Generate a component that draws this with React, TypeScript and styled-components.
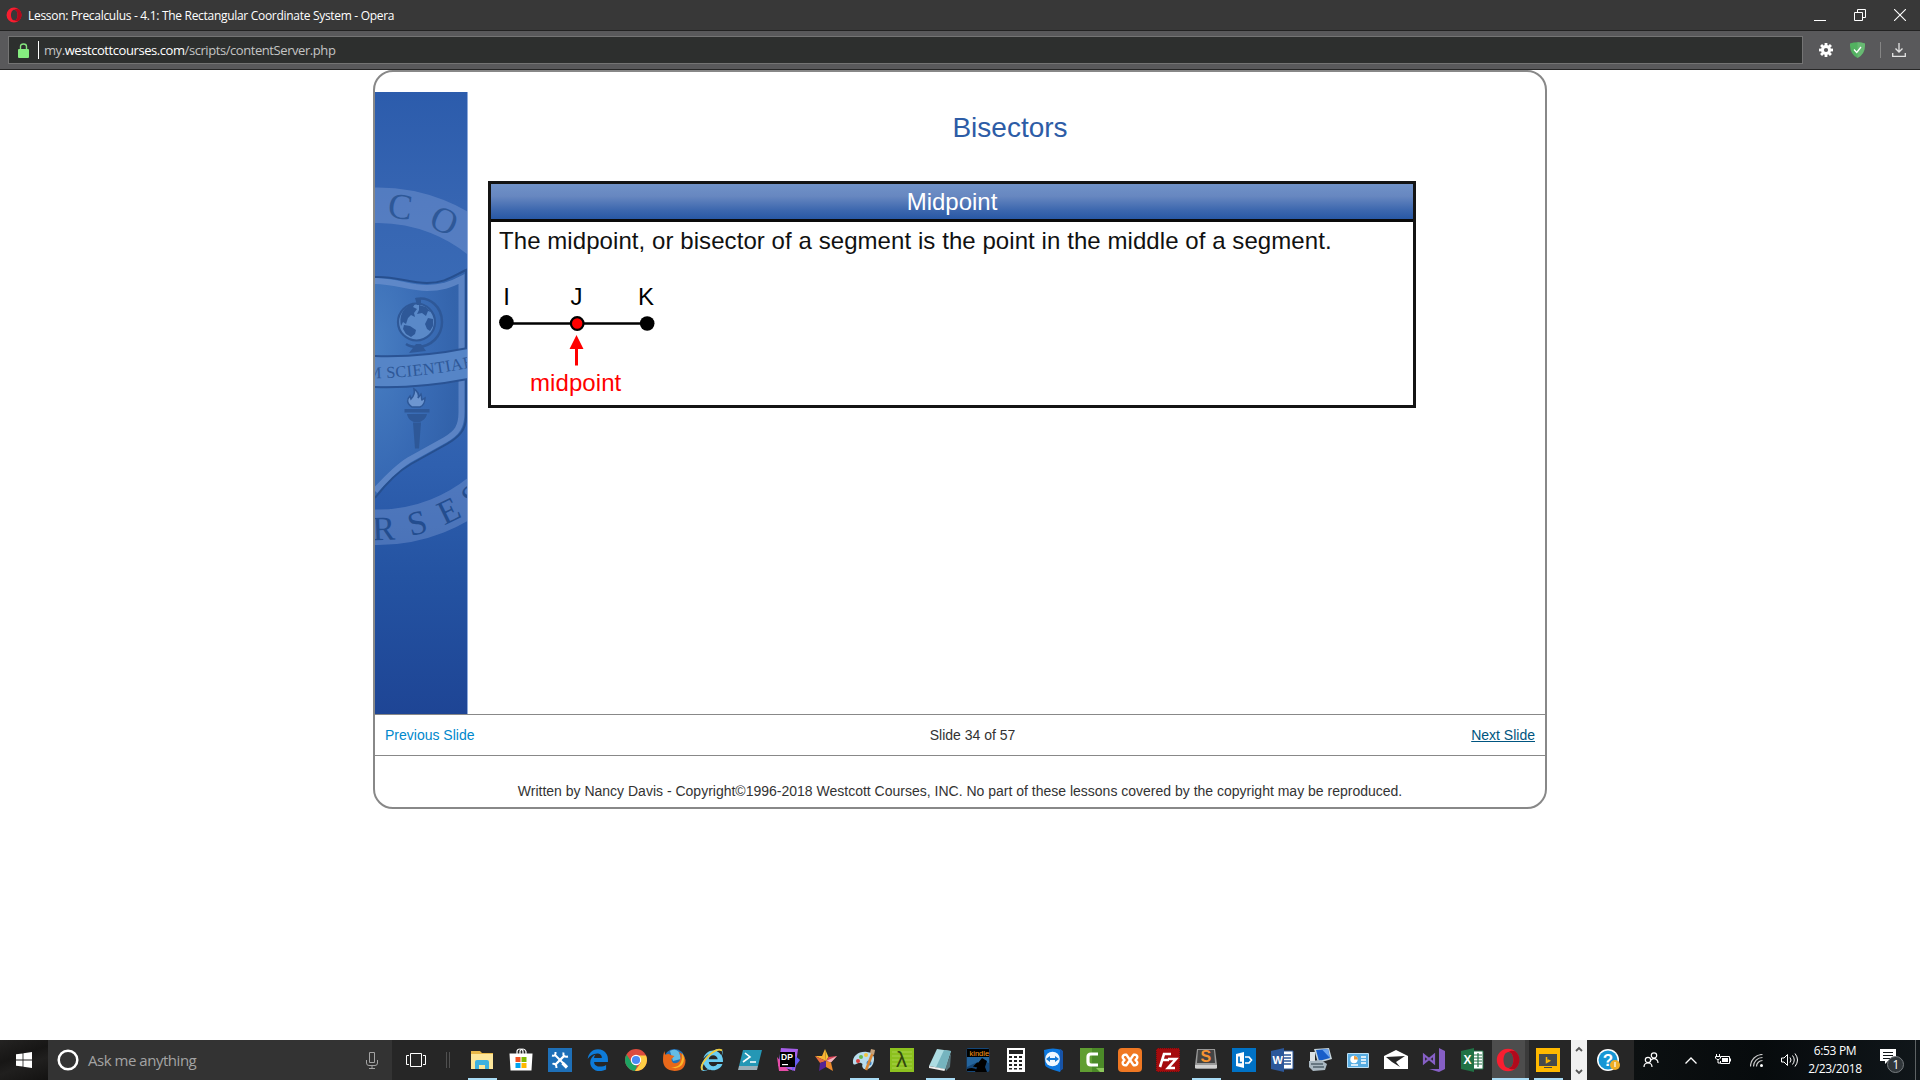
import React from "react";
import styled, { createGlobalStyle } from "styled-components";
import { FaInternetExplorer } from "react-icons/fa";

const GlobalStyle = createGlobalStyle`
  * { box-sizing: border-box; }
  html, body { margin: 0; padding: 0; background: #fff; overflow: hidden; }
  svg { display: block; flex: none; }
`;
const UI = `"Open Sans", "Noto Sans", sans-serif`;
const ARIAL = `"Liberation Sans", Arial, sans-serif`;

const Screen = styled.div`
  width: 1920px;
  height: 1080px;
  display: flex;
  flex-direction: column;
  background: #fff;
  font-family: ${UI};
`;

/* ---------- browser chrome ---------- */
const TitleBar = styled.header`
  height: 31px;
  display: flex;
  align-items: center;
  padding: 0 14px 0 6px;
  background: #383838;
  border-bottom: 1px solid #222;
  color: #fff;
`;
const WindowTitle = styled.span`
  flex: 1;
  margin-left: 6px;
  font-size: 12px;
  letter-spacing: -0.3px;
  white-space: nowrap;
  padding-top: 1px;
`;
const WindowButtons = styled.div`
  display: flex;
  gap: 28px;
`;
const AddressRow = styled.div`
  height: 39px;
  display: flex;
  align-items: center;
  padding: 0 14px 0 8px;
  background: #59595b;
  border-bottom: 1px solid #272727;
`;
const AddressField = styled.div`
  width: 1795px;
  height: 28px;
  display: flex;
  align-items: center;
  padding: 0 9px;
  background: #2d2f2e;
  border: 1px solid #747474;
  color: #c4c4c4;
  font-size: 13px;
  letter-spacing: -0.43px;
  white-space: nowrap;
  b { font-weight: 400; color: #fff; }
`;
const Caret = styled.i`
  width: 1px;
  height: 18px;
  margin: 0 5px 0 9px;
  background: #fff;
`;
const ToolButtons = styled.div`
  flex: 1;
  display: flex;
  align-items: center;
  justify-content: flex-end;
`;
const ToolSeparator = styled.i`
  width: 1px;
  height: 16px;
  margin: 0 11px 0 15px;
  background: #858585;
`;

/* ---------- lesson page ---------- */
const Page = styled.main`
  height: 970px;
  display: flex;
  justify-content: center;
  align-items: flex-start;
`;
const Card = styled.section`
  width: 1174px;
  height: 739px;
  display: flex;
  flex-direction: column;
  border: 2px solid #888;
  border-radius: 20px;
  padding-top: 20px;
  font-family: ${ARIAL};
`;
const SlideBody = styled.div`
  height: 622px;
  display: flex;
`;
const Content = styled.div`
  flex: 1;
  padding-left: 20px;
`;
const SlideTitle = styled.h1`
  width: 1044px;
  margin: 0;
  padding: 20px 0 0;
  height: 89px;
  font-weight: 400;
  font-size: 28px;
  line-height: 32px;
  text-align: center;
  color: #2d5ca6;
`;
const Box = styled.article`
  width: 928px;
  height: 227px;
  border: 3px solid #141414;
`;
const BoxHeader = styled.h2`
  margin: 0;
  height: 38px;
  border-bottom: 3px solid #0a0a0a;
  background: linear-gradient(#7092c8, #6787c0 35%, #3c67ae 75%, #2858a5);
  color: #fff;
  font-weight: 400;
  font-size: 24px;
  line-height: 35px;
  text-align: center;
`;
const Definition = styled.p`
  margin: 0;
  padding: 5px 0 0 8px;
  font-size: 24px;
  letter-spacing: 0.07px;
  line-height: 28px;
  white-space: nowrap;
  color: #111;
`;
const NavRow = styled.nav`
  height: 42px;
  display: grid;
  grid-template-columns: 1fr auto 1fr;
  align-items: center;
  padding: 0 10px;
  border-top: 1px solid #888;
  border-bottom: 1px solid #888;
  font-size: 14px;
  color: #333;
`;
const SlideCount = styled.span`
  padding-left: 25px;
`;
const SlideLink = styled.a<{ $hover?: boolean }>`
  justify-self: ${(p) => (p.$hover ? "end" : "start")};
  color: ${(p) => (p.$hover ? "#005580" : "#0088cc")};
  text-decoration: ${(p) => (p.$hover ? "underline" : "none")};
`;
const Copyright = styled.footer`
  padding-top: 26px;
  font-size: 14px;
  line-height: 18px;
  text-align: center;
  color: #333;
`;

/* ---------- taskbar ---------- */
const Taskbar = styled.footer`
  height: 40px;
  display: flex;
  background: #262626;
  color: #fff;
  > * { flex: none; }
`;
const StartButton = styled.div`
  width: 48px;
  display: flex;
  align-items: center;
  justify-content: center;
  background: linear-gradient(160deg, #242322, #171615 40%, #201f1e 60%, #131211);
`;
const SearchBox = styled.div`
  width: 344px;
  display: flex;
  align-items: center;
  padding: 0 14px 0 9px;
  background: #333;
  color: #a3a3a3;
  font-size: 15px;
  letter-spacing: -0.47px;
  span { flex: 1; padding-left: 9px; }
`;
const TaskTools = styled.div`
  width: 71px;
  display: flex;
  align-items: center;
  padding-left: 14px;
  gap: 20px;
`;
const AppStrip = styled.div`
  width: 1108px;
  display: flex;
`;
const AppCell = styled.div<{ $active?: boolean }>`
  width: 38px;
  flex: none;
  height: 40px;
  display: flex;
  flex-direction: column;
  align-items: center;
  justify-content: space-between;
  padding: ${(p) => (p.$active ? "8px 4px 0 0" : "8px 0 0")};
  background: ${(p) => (p.$active ? "linear-gradient(90deg, #262626 1px, #4d4d4d 1px, #4d4d4d 34px, #3b3b3b 34px)" : "none")};
  &:nth-child(2) { width: 40px; }
`;
const RunBar = styled.i<{ $on?: boolean; $wide?: boolean }>`
  width: ${(p) => (p.$wide ? 37 : 29)}px;
  height: 2px;
  align-self: ${(p) => (p.$wide ? "flex-end" : "center")};
  margin-right: ${(p) => (p.$wide ? -4 : 0)}px;
  background: ${(p) => (p.$on ? "#a9dcf5" : "transparent")};
`;
const Scroller = styled.div`
  width: 16px;
  display: flex;
  flex-direction: column;
  align-items: center;
  justify-content: space-between;
  padding: 6px 0 5px;
  background: #f0f0f0;
`;
const HelpCell = styled.div`
  width: 47px;
  display: flex;
  align-items: center;
  padding-left: 9px;
`;
const Tray = styled.div`
  width: 286px;
  display: flex;
  align-items: center;
  padding-left: 8px;
  background: linear-gradient(90deg, #0c1011, #070b0d 45%, #10161a);
`;
const TrayItem = styled.div<{ $w: number }>`
  width: ${(p) => p.$w}px;
  flex: none;
  display: flex;
  justify-content: center;
`;
const Clock = styled.div`
  width: 64px;
  flex: none;
  display: flex;
  flex-direction: column;
  align-items: center;
  font-size: 12px;
  line-height: 18px;
  letter-spacing: -0.35px;
  white-space: nowrap;
`;
const ActionCenter = styled.div`
  width: 48px;
  flex: none;
  display: flex;
  justify-content: center;
  padding-left: 2px;
`;
const DesktopEdge = styled.i`
  width: 1px;
  height: 40px;
  margin-left: auto;
  margin-right: 4px;
  background: #5d6264;
`;

function OperaO({ size }: { size: number }) {
  return (
    <svg width={size} height={size} viewBox="0 0 24 24">
      <path fill="#f81e30" fillRule="evenodd" d="M12 .8A11.200 11.200 0 1012 23.200 11.200 11.200 0 1012 .8zM12.500 4c3 0 4.900 3.600 4.900 8s-1.900 8-4.900 8-5-3.600-5-8 2-8 5-8z" />
      <path fill="#b00a1c" d="M12.500 4C15 2 18 2.500 19.600 3.600 25 8.500 24.400 16 19.600 20.400 18 21.500 15 22 12.500 20c3 0 4.900-3.600 4.900-8s-1.900-8-4.900-8z" />
    </svg>
  );
}

const seal = "#2e5898";

function SealBanner() {
  return (
    <svg width="93" height="622" viewBox="0 0 93 622">
      <defs>
        <linearGradient id="bg" x1="0" y1="0" x2="0" y2="1">
          <stop offset="0" stopColor="#2c5cac" />
          <stop offset=".18" stopColor="#3665b2" />
          <stop offset=".38" stopColor="#3b6db7" />
          <stop offset=".6" stopColor="#2f60af" />
          <stop offset=".78" stopColor="#2453a2" />
          <stop offset="1" stopColor="#1e4595" />
        </linearGradient>
        <radialGradient id="shield" cx="0" cy=".35" r=".9">
          <stop offset="0" stopColor="#4c83c5" />
          <stop offset=".6" stopColor="#3a6db6" />
          <stop offset="1" stopColor="#3262a9" />
        </radialGradient>
      </defs>
      <rect width="93" height="622" fill="url(#bg)" />
      <circle cx="3" cy="274.300" r="161" fill="none" stroke="#8aa6dc" strokeOpacity=".36" strokeWidth="35.500" />
      <g fill={seal} fontFamily="Liberation Serif, serif" fontSize="36" textAnchor="middle">
        <text transform="translate(3 274) rotate(8) translate(0 -149)">C</text>
        <text transform="translate(3 274) rotate(24.500) translate(0 -148)">O</text>
        <g fontSize="34" fill="#234d8f">
          <text transform="translate(3 274) rotate(-2) translate(0 174)">R</text>
          <text transform="translate(3 274) rotate(-14) translate(0 173)">S</text>
          <text transform="translate(3 274) rotate(-26) translate(0 172.500)">E</text>
          <text transform="translate(3 274) rotate(-36) translate(0 172)">S</text>
        </g>
      </g>
      <path d="M0 185C20 184 34 191 52 191C70 191 78 184 91 178V325C91 338 84 345 72 352L36 372C22 380 10 393 0 406z" fill="url(#shield)" fillOpacity=".8" />
      <path d="M0 189C20 189 34 196 52 196C66 196 75 193 86.500 187V320C86.500 335 82 341 70 348L34 368C21 376 10 388 0 399" fill="none" stroke="#6c92cf" strokeOpacity=".7" strokeWidth="6" />
      <path d="M0 185C20 184 34 191 52 191C70 191 78 184 91 178V325C91 338 84 345 72 352L36 372C22 380 10 393 0 406" fill="none" stroke="#264f8f" strokeWidth="2" />
      {/* globe on its stand */}
      <circle cx="41.500" cy="230" r="18.500" fill="#5a89c8" stroke={seal} strokeWidth="2.200" />
      <path fill={seal} d="M27 221c3-6 8-9 13-9l-2 3 4 2-3 4 1 4-4-2-3 3-2 6-3-2-2 4c-1-4-1-9 1-13zM44 213l7 2 5 5-3-1-2 5-4-3-5 1 2-4zM29 233l6 1 6 4-1 4-4 3-5-3-3-5zM53 226l5 1v7l-3 5-3-2-2-5z" />
      <path d="M41 207c14-3 26 8 26 23 0 14-11 25-25 25-4 0-8-1-11-3" fill="none" stroke={seal} strokeWidth="2.500" />
      <path d="M40 206h6v7h-4zM41 252h5l5 7-17 2z" fill={seal} />
      {/* motto ribbon */}
      <path d="M0 264C32 265 64 262 93 256V287C62 293 30 295 0 294z" fill="#5685c7" />
      <path d="M0 264C32 265 64 262 93 256M0 295C30 296 62 293 93 287" fill="none" stroke="#2a5394" strokeWidth="2" />
      <path id="motto" d="M-8 286.500C28 286 62 283 112 272" fill="none" />
      <text fill={seal} fontFamily="Liberation Serif, serif" fontSize="16.500" letterSpacing=".35">
        <textPath href="#motto">M SCIENTIAE</textPath>
      </text>
      {/* torch */}
      <path fill="#6d96d0" stroke={seal} strokeWidth="1.500" d="M37 315c-6-4-5-8-2-11l1 3c3-3 4-6 3-10 5 3 5 6 4 9l3-4c1 3 0 4 1 6l3-2c0 4-2 8-5 9z" />
      <path fill={seal} d="M29.500 317h25v3.500h-25zM32 322h20c-1 5-5 7-7 8h-6c-3-1-6-3-7-8zM38 330.500h8l-2 26h-4z" />
      <rect x="92" width="1" height="622" fill="#8fabdb" />
    </svg>
  );
}

function MidpointDiagram() {
  return (
    <svg width="200" height="135" viewBox="491 255 200 135" fontFamily="Liberation Sans, Arial, sans-serif" fontSize="24" fill="#000">
      <g textAnchor="middle">
        <text x="506.700" y="305">I</text>
        <text x="576.500" y="305">J</text>
        <text x="646" y="305">K</text>
      </g>
      <path d="M506 323.500H647" stroke="#000" strokeWidth="2.600" />
      <circle cx="506.400" cy="322.300" r="7.300" />
      <circle cx="647.200" cy="323.500" r="7.300" />
      <circle cx="577.200" cy="323.500" r="6.300" fill="#f00" stroke="#000" strokeWidth="2.200" />
      <path d="M576.500 335l7 14h-5.500v16.500h-3V349h-5.500z" fill="#f00" />
    </svg>
  );
}
const MidpointLabel = styled.div`
  margin: -21px 0 0 39px;
  font-size: 24px;
  line-height: 28px;
  letter-spacing: 0.08px;
  color: #f00;
`;

/* ---------- taskbar icons ---------- */
const I = ({ children }: { children: React.ReactNode }) => (
  <svg width="24" height="24" viewBox="0 0 24 24" fontFamily="Liberation Sans, Arial, sans-serif">{children}</svg>
);

const edgePath =
  "M486.286 243.671c0-44.032-7.754-84.465-28.801-122.405C416.498 47.879 343.912 8.001 258.893 8.001 118.962 7.724 40.617 113.214 26.056 227.679c42.429-61.312 117.073-121.376 220.375-124.966 0 0 109.666 0 99.419 104.957H169.997c6.369-37.386 18.554-58.986 34.339-78.926-75.048 34.893-121.850 96.096-120.742 188.315.830 71.448 50.124 144.836 120.743 171.976 83.357 31.847 192.776 7.200 240.132-21.324V363.307c-80.864 56.494-270.871 60.925-272.255-67.572h314.073z";

const apps: { icon: React.ReactNode; run?: boolean; active?: boolean }[] = [
  { run: true, icon: <I><path fill="#e8b84a" d="M1 3h9l2 2h11v16H1z" /><path fill="#fde69a" d="M1 6h22v15H1z" /><path fill="#3fb1e0" d="M5 14q0-2 2-2h10q2 0 2 2v7h-4v-4H9v4H5z" /></I> },
  { icon: <I><path d="M8 6V3.500Q8 1 11 1t3 2.500V6M11 6V3Q12 1 14 1t3 2.500V6" fill="none" stroke="#fff" strokeWidth="1.200" /><path fill="#fff" d="M.5 5.500h23l-1 17h-21z" /><path fill="#f25022" d="M6.500 9h5v5h-5z" /><path fill="#7fba00" d="M12.500 9h5v5h-5z" /><path fill="#00a4ef" d="M6.500 15h5v5h-5z" /><path fill="#ffb900" d="M12.500 15h5v5h-5z" /></I> },
  { icon: <I><path fill="#1e70b8" d="M0 0h24v24H0z" /><path d="M7 7l11 11" stroke="#fff" strokeWidth="2" /><path d="M16 8L7 17" stroke="#fff" strokeWidth="2.400" /><path d="M4 7.500q4 1 3.500-3.500M15.500 4.500q-1 5 4.500 4M4.500 16q4-1 4 4" stroke="#fff" strokeWidth="2" fill="none" /><path d="M14.500 15l4.500 4.500" stroke="#fff" strokeWidth="3.200" /></I> },
  { icon: <svg width="22" height="24" viewBox="10 -20 500 545"><path fill="#0e7bd8" d={edgePath} /></svg> },
  { icon: <I><circle cx="12" cy="12" r="11" fill="#dd4b3e" /><path fill="#1da362" d="M2.500 6.500L8 15l5 3-2 5A11 11 0 012.500 6.500z" /><path fill="#ffce44" d="M22 7.500H13l4 7-6 8.500A11 11 0 0022 7.500z" /><circle cx="12" cy="12" r="5.200" fill="#fff" /><circle cx="12" cy="12" r="4.100" fill="#4a8af4" /></I> },
  { icon: <I><circle cx="12.500" cy="11.500" r="10.500" fill="#2470b5" /><path d="M8 3q5-3 9 1l2 7-8 2z" fill="#64bde6" /><path fill="#e8681a" d="M2.500 3q0 2 1 4 3-2 5 0l4 1-3 3q0 5 5 4 4-1 4-6 0-3-2-5 6 2 7 8 0 11-11 11Q1 22 1 12q0-6 1.500-9z" /><path d="M20 5q4 6 0 12-5 5-11 2 8 1 10-5 2-4 1-9z" fill="#fbb829" /></I> },
  { icon: <I><g transform="translate(1 1)"><FaInternetExplorer size={22} color="#69cdf2" /></g><path d="M2.500 22Q-1 18 8 8.500T22 2.500" stroke="#f2ca38" strokeWidth="1.800" fill="none" /></I> },
  { icon: <I><path fill="#2597b5" d="M5 2h19l-4 16H1z" /><path fill="#9aaeb8" d="M1 18h19l-1 4H0z" /><path d="M7 5l5 4-7 5M12 14h6" stroke="#fff" strokeWidth="1.600" fill="none" /></I> },
  { icon: <I><path fill="#a65ee8" d="M5 0l17 1-3 22-17-5z" /><path fill="#e64ca6" d="M1 9l12 14-10 0z" /><path fill="#665df0" d="M17 6l7 6-8 11z" /><path d="M4 4h15v15H4z" /><text x="5" y="12" fontSize="8.500" fontWeight="700" fill="#fff">DP</text><path fill="#fff" d="M6 16h6v1.200H6z" /></I> },
  { icon: <I><path fill="#f7c331" d="M11 1l3.500 8L12 13z" /><path fill="#f9b233" d="M11 1L8 8l4 5zM1 8l7 0 4 5z" /><path fill="#e0475c" d="M14.500 9L23 8l-6 6-5-1z" /><path fill="#f0b5bd" d="M12 13l11-5-6 6.500z" /><path fill="#e96a3e" d="M1 8l11 5-6 2z" /><path fill="#552396" d="M12 13v6l-7 4 1-8z" /><path fill="#ef8a2c" d="M12 13l5 1.500L19 23l-7-4z" /></I> },
  { run: true, icon: <I><path fill="#b8dced" d="M1 15C0 8 7 3 15 4s8 7 6 12-8 7-10 4 1-4-2-5-7 4-8 0z" /><circle cx="6" cy="13" r="2" fill="#da3f3d" /><circle cx="9" cy="9" r="2" fill="#65b94c" /><circle cx="14" cy="7" r="2" fill="#f1c540" /><circle cx="17" cy="15" r="2.500" fill="#3b83cb" /><path d="M21 4L14 22" stroke="#d88634" strokeWidth="2.600" /><path d="M19 1l4 1-1 5-4-2z" fill="#c6a27a" /></I> },
  { icon: <I><path fill="#8cc11f" d="M0 0h24v24H0z" /><path d="M2 4h20M2 8h20M2 12h20M2 16h20M2 20h20" stroke="#a9d34f" /><text x="6" y="19" fontSize="22" fill="#31480f">λ</text></I> },
  { run: true, icon: <I><path fill="#58757d" d="M17 20l6-15-1 14-4 4z" /><path fill="#addce2" d="M9 1l14 2-6 18-16-3z" /><path fill="#76b4bf" d="M16 2l7 1-6 18-9-1.700z" /><path fill="#eee" d="M1 18l16 3-.5 2L1 20z" /></I> },
  { icon: <I><rect x=".5" width="23" height="24" rx="2" fill="#144779" /><path fill="#2f79b8" d="M1 9h22v6q-8-4-22 4z" opacity=".6" /><path fill="#000" d="M1 1h22v8H1zM9 24q4-8 3-9l4-5 5 3-2 6 2 5z" /><path d="M1 21q7-3 11 2H1z" /><path d="M12 15l-3 3 5 1" stroke="#000" strokeWidth="2" /><text x="3.500" y="7.500" fontSize="7.500" fill="#ff9b19">kindle</text></I> },
  { icon: <I><path fill="#fff" d="M3 0h18v24H3z" /><path fill="#222" d="M5 2h14v4H5zM5 8h3v2H5zM10 8h3v2h-3zM15 8h3v2h-3zM5 12h3v2H5zM10 12h3v2h-3zM15 12h3v2h-3zM5 16h3v2H5zM10 16h3v2h-3zM15 16h3v2h-3zM5 20h3v1.500H5zM10 20h3v1.500h-3zM15 20h3v1.500h-3z" /></I> },
  { icon: <I><path fill="#0d78df" d="M2 2q9-3 18 0v18l-2 4Q3 20 3 17z" /><path fill="#1753a7" d="M18 1l3 2v18l-3 2z" /><circle cx="10.500" cy="11" r="7.300" fill="#eff8ff" /><path fill="#167bd7" d="M4 11l4-3v2h5V8l4 3-4 3v-2H8v2z" /></I> },
  { icon: <I><path fill="#4c8a28" d="M0 0h24v24H0z" /><path fill="#71af3a" d="M0 0h12v24H0z" opacity=".55" /><path fill="#8cc75a" d="M16 20h8v4h-4z" /><path d="M18 6h-7q-3 0-3 3v5q0 3 3 3h7" stroke="#fff" strokeWidth="3.200" fill="none" /></I> },
  { icon: <I><rect width="24" height="24" rx="4" fill="#f07823" /><path d="M12 12L8.500 6.800H7a2.300 2.300 0 00-2 3.500L6.500 12 5 13.700a2.300 2.300 0 002 3.500h1.500zM12 12l3.500-5.200H17a2.300 2.300 0 012 3.500L17.500 12l1.500 1.700a2.300 2.300 0 01-2 3.500h-1.500z" fill="none" stroke="#fff" strokeWidth="2.400" strokeLinejoin="round" /></I> },
  { icon: <I><path fill="#a50b0d" d="M1 0h22v1h1v22h-1v1H1v-1H0V1h1z" /><path d="M1 .5h22M1 23.500h22M.5 1v22M23.500 1v22" stroke="#621010" strokeDasharray="1 1" /><path d="M4 19L8 6h7M6 12h7M12 11h8l-8 9h7" fill="none" stroke="#fff" strokeWidth="2.600" /></I> },
  { run: true, icon: <I><path fill="#999" d="M3 1h18l2 16v3q0 1-2 1H3q-2 0-2-1v-3z" /><path fill="#d0d0d0" d="M1 17h22v3H1z" /><path fill="#444" d="M4 2h16l1 13H3z" /><text x="6.500" y="14" fontSize="16" fontWeight="700" fill="#f49332">S</text></I> },
  { icon: <I><path fill="#0072c6" d="M0 0h24v24H0z" /><path fill="#fff" d="M4 6l8-2v16l-8-2z" /><path d="M7 8.500v6h3" stroke="#0072c6" strokeWidth="1.700" fill="none" /><path d="M13 9h4l2.500 3-2.500 3h-4" fill="none" stroke="#fff" strokeWidth="1.700" /></I> },
  { icon: <I><path fill="#fff" stroke="#2b579a" d="M11 3h12v18H11z" /><path d="M14 7h7M14 10h7M14 13h7M14 16h7" stroke="#2b579a" strokeWidth="1.500" /><path fill="#2b579a" d="M1 3l13-3v24L1 21z" /><text x="2.500" y="16" fontSize="11" fontWeight="700" fill="#fff">W</text></I> },
  { icon: <I><path fill="#c5d3da" d="M6 1l15-1 3 11-14 4z" /><path fill="#185ec9" d="M8 2l12-1 2 9-11 3z" /><path fill="#6da6f0" d="M14 1.500l6-.5 2 9z" /><path fill="#aab8c1" d="M1 13l12-1 6 4-2 6-12 1-4-4z" /><path d="M3 16h12M5 19h11" stroke="#52616c" strokeWidth="1.500" /><path d="M2 4h5v9H2z" fill="#dbe1e5" /></I> },
  { icon: <I><rect x="1" y="5" width="22" height="15" rx="1" fill="#bcdff4" /><path fill="#58ade2" d="M2 6h20v13H2z" /><circle cx="8" cy="11.500" r="3.700" fill="#fff" /><path fill="#ee9c3c" d="M8 11.500V8a4 4 0 014 3.500z" /><path d="M15 9h5M15 12h5M15 15h5M5 17h7" stroke="#fff" strokeWidth="1.500" /></I> },
  { icon: <I><path fill="#fff" d="M12 2l12 6v13H0V8z" /><path fill="#262626" d="M2 9l19-1-9 6 4 5-8-5z" /></I> },
  { icon: <I><path fill="#865fc5" d="M17 0l6 3v18l-6 3-10-3 10 0z" /><path d="M2 7v8l5-4 5 4V7l-5 4z" fill="none" stroke="#865fc5" strokeWidth="2.200" /></I> },
  { icon: <I><path fill="#fff" stroke="#207245" d="M11 3h12v18H11z" /><path d="M18 5v14M14 7h8M14 10h8M14 13h8M14 16h8" stroke="#207245" strokeWidth="1.200" /><path fill="#207245" d="M1 3l13-3v24L1 21z" /><text x="3.500" y="16" fontSize="12" fontWeight="700" fill="#fff">X</text></I> },
  { run: true, active: true, icon: <OperaO size={24} /> },
  { run: true, icon: <I><path fill="#ffb900" d="M0 0h24v24H0z" /><path fill="#454a4c" d="M3 6h18v12H3zM8 19h8v1H8z" /><path d="M10.500 9v5.500l3-1.700-2-1" fill="none" stroke="#ffb900" strokeWidth="1.500" /></I> },
];

export default function App() {
  return (
    <Screen>
      <GlobalStyle />
      <TitleBar>
        <OperaO size={16} />
        <WindowTitle>Lesson: Precalculus - 4.1: The Rectangular Coordinate System - Opera</WindowTitle>
        <WindowButtons>
          <svg width="12" height="12" viewBox="0 0 12 12"><path d="M0 11.500h12" stroke="#fff" /></svg>
          <svg width="12" height="12" viewBox="0 0 12 12"><path d="M.5 3.500h8v8h-8zM3.500 3.500v-3h8v8h-3" fill="none" stroke="#fff" /></svg>
          <svg width="12" height="12" viewBox="0 0 12 12"><path d="M0 0l12 12M12 0L0 12" stroke="#fff" strokeWidth="1.100" /></svg>
        </WindowButtons>
      </TitleBar>
      <AddressRow>
        <AddressField>
          <svg width="11" height="15" viewBox="0 0 11 15"><path d="M2.500 7V3.500q0-2.500 3-2.500t3 2.500V7" fill="none" stroke="#86e57f" strokeWidth="1.400" /><rect y="6" width="11" height="9" rx="1" fill="#86ed80" /></svg>
          <Caret />
          <span>my.<b>westcottcourses.com</b>/scripts/contentServer.php</span>
        </AddressField>
        <ToolButtons>
          <svg width="14" height="14" viewBox="-7 -7 14 14">
            {[0, 45, 90, 135].map((a) => <path key={a} d="M0-7V7" stroke="#fff" strokeWidth="2.800" transform={`rotate(${a})`} />)}
            <circle r="5" fill="#fff" /><circle r="2.100" fill="#59595b" />
          </svg>
          <svg width="15" height="16" viewBox="0 0 15 16" style={{ marginLeft: 17 }}><path fill="#52b160" d="M0 1.500Q7.500-1 15 1.500 15.500 12 7.500 16-.5 12 0 1.500z" /><path fill="#7cc184" d="M7.500 0Q11 0 15 1.500 15.500 12 7.500 16z" opacity=".5" /><path d="M4 7.500l2.700 3L11 5" fill="none" stroke="#fff" strokeWidth="1.300" /></svg>
          <ToolSeparator />
          <svg width="14" height="14" viewBox="0 0 14 14"><path d="M7 0v9M3.500 5.500L7 9l3.500-3.500M.7 10v3.300h12.600V10" fill="none" stroke="#e4e4e4" strokeWidth="1.300" /></svg>
        </ToolButtons>
      </AddressRow>
      <Page>
        <Card>
          <SlideBody>
            <SealBanner />
            <Content>
              <SlideTitle>Bisectors</SlideTitle>
              <Box>
                <BoxHeader>Midpoint</BoxHeader>
                <Definition>The midpoint, or bisector of a segment is the point in the middle of a segment.</Definition>
                <MidpointDiagram />
                <MidpointLabel>midpoint</MidpointLabel>
              </Box>
            </Content>
          </SlideBody>
          <NavRow>
            <SlideLink>Previous Slide</SlideLink>
            <SlideCount>Slide 34 of 57</SlideCount>
            <SlideLink $hover>Next Slide</SlideLink>
          </NavRow>
          <Copyright>Written by Nancy Davis - Copyright©1996-2018 Westcott Courses, INC. No part of these lessons covered by the copyright may be reproduced.</Copyright>
        </Card>
      </Page>
      <Taskbar>
        <StartButton>
          <svg width="16" height="16" viewBox="0 0 16 16"><path fill="#fff" d="M0 2.300L6.600 1.400V7.600H0zM7.400 1.300L16 0v7.600H7.400zM0 8.400h6.600v6.200L0 13.700zM7.400 8.400H16V16l-8.600-1.300z" /></svg>
        </StartButton>
        <SearchBox>
          <svg width="22" height="22" viewBox="0 0 22 22"><circle cx="11" cy="11" r="9.300" fill="none" stroke="#fff" strokeWidth="2.500" /></svg>
          <span>Ask me anything</span>
          <svg width="12" height="17" viewBox="0 0 12 17"><path d="M3.500.5h5v10h-5zM.5 8v3q0 2.500 2.500 2.500h6q2.500 0 2.500-2.500V8M6 13.500v3M3 16.500h6" fill="none" stroke="#a3a3a3" /></svg>
        </SearchBox>
        <TaskTools>
          <svg width="20" height="14" viewBox="0 0 20 14"><path d="M4.500.5h11v13h-11zM3 2.500H.5v9H3M17 2.500h2.500v9H17" fill="none" stroke="#fff" /></svg>
          <svg width="4" height="16" viewBox="0 0 4 16"><path d="M.5 0v16M3.500 0v16" stroke="#505050" /></svg>
        </TaskTools>
        <AppStrip>
          {apps.map((app, index) => (
            <AppCell key={index} $active={app.active}>
              {app.icon}
              <RunBar $on={app.run} $wide={app.active} />
            </AppCell>
          ))}
        </AppStrip>
        <Scroller>
          <svg width="8" height="6" viewBox="0 0 8 6"><path d="M1 5l3-3 3 3" fill="none" stroke="#555" strokeWidth="1.800" /></svg>
          <svg width="8" height="6" viewBox="0 0 8 6"><path d="M1 1l3 3 3-3" fill="none" stroke="#555" strokeWidth="1.800" /></svg>
        </Scroller>
        <HelpCell>
          <svg width="25" height="24" viewBox="0 0 25 24" fontFamily="Liberation Sans, sans-serif" fontWeight="700"><circle cx="12" cy="12" r="11" fill="#fff" /><circle cx="12" cy="12" r="9.500" fill="#1696d5" /><text x="6.800" y="18" fontSize="17" fill="#fff">?</text><circle cx="19" cy="17" r="5" fill="#efae27" /><path d="M19 14v5" stroke="#fff" strokeWidth="1.200" /></svg>
        </HelpCell>
        <Tray>
          <TrayItem $w={18}><svg width="16" height="16" viewBox="0 0 16 16" fill="none" stroke="#fff" strokeWidth="1.200"><circle cx="11" cy="3.500" r="2.700" /><circle cx="5" cy="8" r="2.700" /><path d="M1 15q0-4 4-4t4 4M8 8q3-3 6 0 1 1 1 3" /></svg></TrayItem>
          <TrayItem $w={62}><svg width="12" height="7" viewBox="0 0 12 7"><path d="M.5 6.500L6 1l5.500 5.500" fill="none" stroke="#fff" strokeWidth="1.300" /></svg></TrayItem>
          <TrayItem $w={2}><svg width="16" height="12" viewBox="0 0 16 12"><path d="M6 2.500h8.500v7h-9V7M15.500 4.500v3M1.500 0v2M4.500 0v2M.5 2.500h5V4L4 5.500H2L.5 4zM3 5.500V9h2" fill="none" stroke="#fff" /><path d="M7 4h6v4H7z" fill="#fff" /></svg></TrayItem>
          <TrayItem $w={65}><svg width="13" height="13" viewBox="0 0 13 13"><path d="M.5 12.500A12 12 0 0112.500.5M3.500 12.500a9 9 0 019-9M6.500 12.500a6 6 0 016-6" stroke="#ccc" fill="none" strokeWidth="1.200" /><circle cx="11.500" cy="11.500" r="1.500" fill="#fff" /></svg></TrayItem>
          <TrayItem $w={0}><svg width="17" height="14" viewBox="0 0 17 14"><path d="M.5 5h2.500L6.500 1.500v11L3 9H.5zM9 4.500q2 2.500 0 5M11.500 2.500q3.500 4.500 0 9M14 .5q5 6.500 0 13" fill="none" stroke="#fff" /></svg></TrayItem>
          <TrayItem $w={14} />
          <Clock><span>6:53 PM</span><span>2/23/2018</span></Clock>
          <ActionCenter>
            <svg width="25" height="25" viewBox="0 0 25 25" fontFamily="Open Sans, sans-serif"><path fill="#fff" d="M0 1h16v12h-8l-3 3v-3H0z" /><path d="M3 4.500h10M3 7.500h10M3 10.500h7" stroke="#10161a" /><circle cx="15.500" cy="16.500" r="8" fill="#30363a" stroke="#777c80" /><text x="12.500" y="21" fontSize="12" fill="#fff">1</text></svg>
          </ActionCenter>
          <DesktopEdge />
        </Tray>
      </Taskbar>
    </Screen>
  );
}
